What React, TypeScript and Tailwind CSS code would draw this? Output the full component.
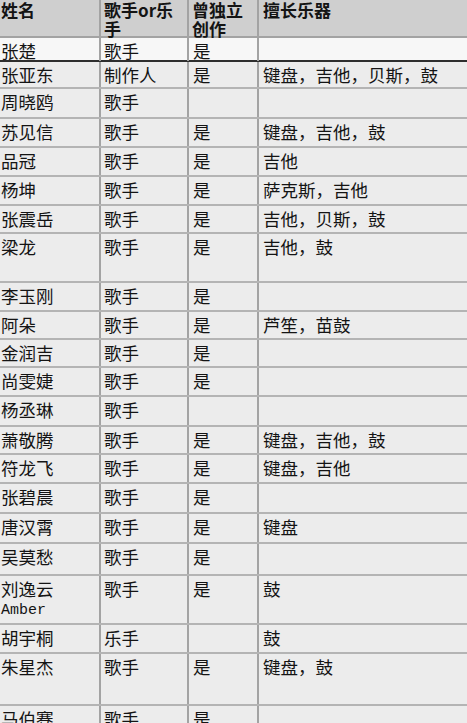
import React from "react";

// ── Types ────────────────────────────────────────────────────────────────────

interface ArtistRow {
  name: string;
  sub?: string;
  role: string;
  solo: boolean;
  instruments: string;
  h: string;
  bg?: string;
  border?: string;
}

// ── Data ─────────────────────────────────────────────────────────────────────

const ROWS: ReadonlyArray<ArtistRow> = [
  { name: "张楚", role: "歌手", solo: true, instruments: "", h: "h-[24px]", bg: "bg-[#f7f7f7]", border: "border-[#2e2e2e]" },
  { name: "张亚东", role: "制作人", solo: true, instruments: "键盘，吉他，贝斯，鼓", h: "h-[27px]" },
  { name: "周晓鸥", role: "歌手", solo: false, instruments: "", h: "h-[30px]" },
  { name: "苏见信", role: "歌手", solo: true, instruments: "键盘，吉他，鼓", h: "h-[29px]" },
  { name: "品冠", role: "歌手", solo: true, instruments: "吉他", h: "h-[29px]" },
  { name: "杨坤", role: "歌手", solo: true, instruments: "萨克斯，吉他", h: "h-[29px]" },
  { name: "张震岳", role: "歌手", solo: true, instruments: "吉他，贝斯，鼓", h: "h-[28px]" },
  { name: "梁龙", role: "歌手", solo: true, instruments: "吉他，鼓", h: "h-[49px]" },
  { name: "李玉刚", role: "歌手", solo: true, instruments: "", h: "h-[29px]" },
  { name: "阿朵", role: "歌手", solo: true, instruments: "芦笙，苗鼓", h: "h-[28px]" },
  { name: "金润吉", role: "歌手", solo: true, instruments: "", h: "h-[28px]" },
  { name: "尚雯婕", role: "歌手", solo: true, instruments: "", h: "h-[29px]" },
  { name: "杨丞琳", role: "歌手", solo: false, instruments: "", h: "h-[30px]" },
  { name: "萧敬腾", role: "歌手", solo: true, instruments: "键盘，吉他，鼓", h: "h-[28px]" },
  { name: "符龙飞", role: "歌手", solo: true, instruments: "键盘，吉他", h: "h-[29px]" },
  { name: "张碧晨", role: "歌手", solo: true, instruments: "", h: "h-[30px]" },
  { name: "唐汉霄", role: "歌手", solo: true, instruments: "键盘", h: "h-[30px]" },
  { name: "吴莫愁", role: "歌手", solo: true, instruments: "", h: "h-[32px]" },
  { name: "刘逸云", sub: "Amber", role: "歌手", solo: true, instruments: "鼓", h: "h-[49px]" },
  { name: "胡宇桐", role: "乐手", solo: false, instruments: "鼓", h: "h-[29px]" },
  { name: "朱星杰", role: "歌手", solo: true, instruments: "键盘，鼓", h: "h-[52px]" },
  { name: "马伯骞", role: "歌手", solo: true, instruments: "", h: "h-[30px]" },
];

const GRID = "grid grid-cols-[101px_88px_70px_1fr]";
const CELL = "border-r-2 border-[#a3a3a3] pt-[2px] leading-[21px]";

// ── Component ────────────────────────────────────────────────────────────────

export default function App() {
  return (
    <div
      className="h-[723px] w-[467px] overflow-hidden bg-[#ececec] text-[17.5px] text-[#141414]"
      style={{ fontFamily: '"Noto Sans CJK SC", "Noto Sans", sans-serif' }}
    >
      {/* Header row */}
      <div className={`${GRID} h-[38px] border-b-2 border-[#a3a3a3] bg-[#cfcfcf] text-[17px] font-bold leading-[19px]`}>
        <div className="border-r-2 border-[#a3a3a3] pl-[1px]">姓名</div>
        <div className="border-r-2 border-[#a3a3a3] pl-[3px]">
          <div>歌手or乐</div>
          <div>手</div>
        </div>
        <div className="border-r-2 border-[#a3a3a3] pl-[3px]">
          <div>曾独立</div>
          <div>创作</div>
        </div>
        <div className="pl-[4px]">擅长乐器</div>
      </div>

      {/* Body rows */}
      {ROWS.map((row) => (
        <div
          key={row.name}
          className={`${GRID} ${row.h} border-b-2 ${row.border ?? "border-[#b4b4b4]"} ${row.bg ?? ""}`}
        >
          <div className={`${CELL} pl-[1px]`}>
            {row.name}
            {row.sub && (
              <div className="text-[15px] leading-[24px]" style={{ fontFamily: '"Liberation Mono", monospace' }}>
                {row.sub}
              </div>
            )}
          </div>
          <div className={`${CELL} pl-[3px]`}>{row.role}</div>
          <div className={`${CELL} pl-[4px]`}>{row.solo ? "是" : ""}</div>
          <div className="pl-[4px] pt-[2px] leading-[21px]">{row.instruments}</div>
        </div>
      ))}
    </div>
  );
}
